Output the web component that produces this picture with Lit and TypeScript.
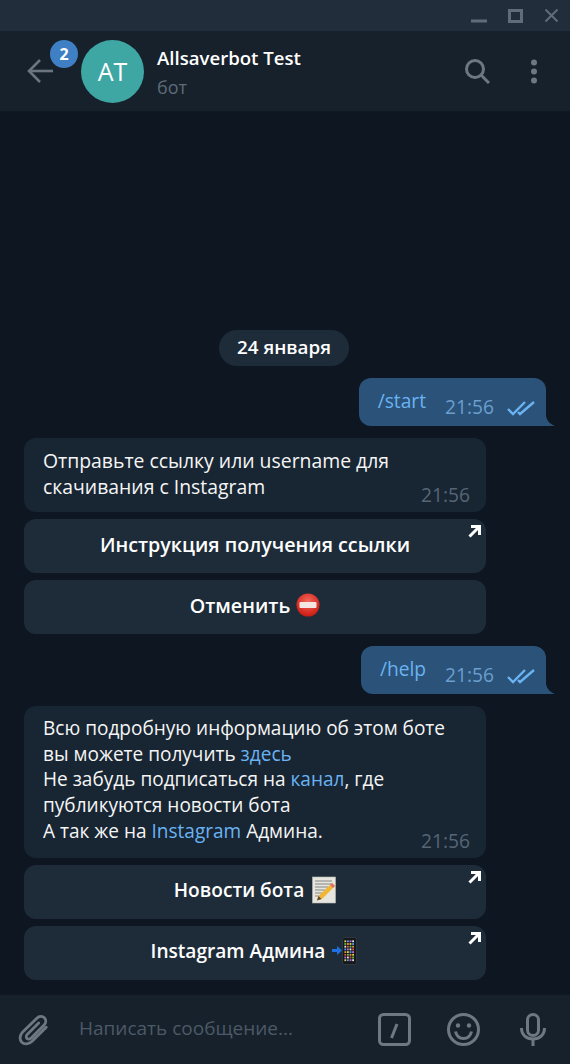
import { LitElement, html, css, svg } from 'lit';
import { customElement } from 'lit/decorators.js';

const checks = html`<svg class="checks" width="28" height="16" viewBox="0 0 28 16" fill="none" stroke="#6ab3f3" stroke-width="2.4">
  <path d="M1 9l5 5L18 2"/><path d="M11 12l2 2L27 2"/>
</svg>`;

const corner = html`<svg class="corner" width="13" height="13" viewBox="0 0 13 13" fill="none" stroke="#fff" stroke-width="3">
  <path d="M3 1.500h8.500V10"/><path d="M11 2L1.500 11.500"/>
</svg>`;

const noEntry = html`<svg class="emoji" width="24" height="24" viewBox="0 0 24 24">
  <defs><radialGradient id="ne" cx="50%" cy="35%" r="70%"><stop offset="0" stop-color="#f4685c"/><stop offset="1" stop-color="#c8140c"/></radialGradient></defs>
  <circle cx="12" cy="12" r="11.500" fill="url(#ne)"/>
  <rect x="3.500" y="9" width="17" height="6" rx="1" fill="#f3e6e2"/>
</svg>`;

const memo = html`<svg class="emoji memo" width="24" height="28" viewBox="0 0 24 28">
  <rect x="0.500" y="1" width="23" height="26" fill="#e6e6de" stroke="#b9b9b0" stroke-width="0.600"/>
  <path d="M3 5h17M3 8h17M3 11h13M3 14h10M3 17h8M3 20h6" stroke="#7d7d7a" stroke-width="0.900"/>
  <path d="M20 7l3 3L10 23l-5 1.500L6.500 20z" fill="#f2b632"/>
  <path d="M20 7l3 3-2 2-3-3z" fill="#e0706a"/>
  <path d="M5 24.500l1.500-4.500 3 3z" fill="#5b4a3a"/>
</svg>`;

const phone = () => {
  const colors = ['#e8d44d', '#d9534f', '#4da3e8', '#6cc04a', '#c46cd0', '#f0943a', '#e8e8e8'];
  const cells = [];
  for (let r = 0; r < 8; r++) {
    for (let c = 0; c < 4; c++) {
      cells.push(svg`<rect x=${13.4 + c * 2.6} y=${3.4 + r * 2.7} width="1.8" height="1.8" fill=${colors[(r * 3 + c * 2) % 7]}/>`);
    }
  }
  return html`<svg class="emoji" width="28" height="28" viewBox="0 0 28 28">
    <rect x="11.500" y="0.500" width="14" height="27" rx="2" fill="#15181d" stroke="#3a3f45" stroke-width="0.700"/>
    ${cells}
    <path d="M1 12h5V9l5 4.500L6 18v-3H1z" fill="#1f6fe0"/>
  </svg>`;
};

@customElement('app-root')
export class AppRoot extends LitElement {
  static styles = css`
    :host {
      display: flex;
      flex-direction: column;
      width: 570px;
      height: 1064px;
      background: #0e1621;
      font-family: 'Open Sans', sans-serif;
      font-size: 19.2px;
      line-height: 25px;
      color: #f5f5f5;
      overflow: hidden;
    }
    .titlebar {
      flex: none;
      height: 31px;
      background: #212d3b;
      display: flex;
      justify-content: flex-end;
      align-items: center;
      padding-right: 12px;
    }
    .titlebar svg { display: block; }
    .titlebar .max { margin: 0 22px 0 21px; }
    .header {
      flex: none;
      height: 81px;
      box-sizing: border-box;
      background: #17212b;
      display: flex;
      align-items: center;
      padding: 0 32px 0 27px;
      border-bottom: 1px solid #101921;
    }
    .back {
      position: relative;
      width: 54px;
      height: 60px;
      flex: none;
    }
    .back svg { position: absolute; left: 0; top: 18px; }
    .badge {
      position: absolute;
      left: 23px;
      top: -1px;
      width: 28px;
      height: 28px;
      border-radius: 50%;
      background: #3e80c3;
      color: #fff;
      font-size: 16px;
      font-weight: 700;
      line-height: 28px;
      text-align: center;
    }
    .avatar {
      width: 63px;
      height: 63px;
      flex: none;
      border-radius: 50%;
      background: #3ea6a3;
      color: #fff;
      font-size: 25px;
      display: flex;
      align-items: center;
      justify-content: center;
    }
    .peer {
      margin-left: 13px;
      flex: 1;
      padding-top: 2px;
    }
    .name {
      font-size: 18.6px;
      font-weight: 600;
      color: #fff;
      line-height: 25px;
    }
    .status {
      font-size: 18px;
      color: #5e6b78;
      line-height: 25px;
      margin-top: 5px;
    }
    .header-icons {
      display: flex;
      align-items: center;
      gap: 40px;
    }
    .header-icons svg { display: block; }
    .chat {
      flex: 1;
      min-height: 0;
      display: flex;
      flex-direction: column;
      justify-content: flex-end;
      padding: 0 24px 14px;
    }
    .date {
      align-self: center;
      margin: 0 0 12px -2px;
      height: 36px;
      padding: 0 18px;
      border-radius: 18px;
      background: #1e2c3a;
      color: #fff;
      font-size: 18.8px;
      font-weight: 600;
      line-height: 35px;
    }
    .out {
      position: relative;
      align-self: flex-end;
      box-sizing: border-box;
      height: 48px;
      background: #2b5278;
      border-radius: 12px 12px 0 12px;
      display: flex;
      color: #6ab3f3;
      padding: 10px 11px 0 19px;
      margin: 0 0 12px;
    }
    .out::after {
      content: '';
      position: absolute;
      right: -9px;
      bottom: 0;
      width: 9px;
      height: 10px;
      background: #2b5278;
      clip-path: path('M0 0 C1 5 4 8 9 10 L0 10 Z');
    }
    .out .text { margin-right: 19px; }
    .out .time {
      color: #6a9fd0;
      margin-top: 6px;
    }
    .checks { margin: 12px 0 0 13px; flex: none; }
    .in {
      position: relative;
      box-sizing: border-box;
      width: 462px;
      background: #182533;
      border-radius: 12px;
      padding: 10px 19px 0;
      margin-bottom: 7px;
      line-height: 25.7px;
    }
    .in p { margin: 0; }
    .in .time {
      position: absolute;
      right: 16px;
      bottom: 5px;
      color: #566575;
      font-size: 19.2px;
      line-height: 25px;
    }
    .in a { color: #6ab3f3; text-decoration: none; }
    .first { height: 74px; font-size: 19.4px; }
    .second { height: 152px; font-size: 19.05px; }
    .btn {
      position: relative;
      box-sizing: border-box;
      width: 462px;
      height: 54px;
      padding-bottom: 4px;
      border-radius: 12px;
      background: #1e2c3a;
      color: #fff;
      font-size: 19.7px;
      font-weight: 600;
      display: flex;
      align-items: center;
      justify-content: center;
      gap: 6px;
      margin-bottom: 7px;
    }
    .btn.small { font-size: 19.1px; }
    .btn.last { margin-bottom: 12px; }
    .btn.end { margin-bottom: 0; }
    .emoji { flex: none; display: block; }
    .memo { margin-left: 2px; }
    .corner { position: absolute; top: 6px; right: 5px; }
    .composer {
      flex: none;
      height: 70px;
      box-sizing: border-box;
      background: #17212b;
      border-top: 1px solid #101921;
      display: flex;
      align-items: center;
      padding: 0 24px 0 18px;
    }
    .composer svg { display: block; flex: none; }
    .placeholder {
      flex: 1;
      margin: 0 0 3px 29px;
      font-size: 19px;
      color: #4c5966;
    }
    .composer-icons {
      display: flex;
      align-items: center;
      gap: 36px;
    }
    .composer-icons .mic { margin-left: 4px; }
  `;

  render() {
    return html`
      <div class="titlebar">
        <svg width="16" height="16" viewBox="0 0 16 16"><path d="M0 13h16" stroke="#5e6c7b" stroke-width="3"/></svg>
        <svg class="max" width="15" height="14" viewBox="0 0 15 14" fill="none" stroke="#5e6c7b" stroke-width="3"><rect x="1.500" y="1.500" width="12" height="11"/></svg>
        <svg width="13" height="13" viewBox="0 0 13 13" fill="none" stroke="#5e6c7b" stroke-width="2"><path d="M0.500 0.500l12 12M12.500 0.500l-12 12"/></svg>
      </div>
      <div class="header">
        <div class="back">
          <svg width="26" height="24" viewBox="0 0 26 24" fill="none" stroke="#6a7580" stroke-width="2.600"><path d="M26 12H2"/><path d="M13 1L2 12l11 11"/></svg>
          <div class="badge">2</div>
        </div>
        <div class="avatar">AT</div>
        <div class="peer">
          <div class="name">Allsaverbot Test</div>
          <div class="status">бот</div>
        </div>
        <div class="header-icons">
          <svg width="25" height="25" viewBox="0 0 25 25" fill="none" stroke="#6d7883" stroke-width="3"><circle cx="10" cy="10" r="8.500"/><path d="M16 16l8 8"/></svg>
          <svg width="8" height="25" viewBox="0 0 8 25" fill="#6d7883"><circle cx="4" cy="3.500" r="3"/><circle cx="4" cy="12.500" r="3"/><circle cx="4" cy="21.500" r="3"/></svg>
        </div>
      </div>
      <div class="chat">
        <div class="date">24 января</div>
        <div class="out">
          <span class="text">/start</span><span class="time">21:56</span>${checks}
        </div>
        <div class="in first">
          <p>Отправьте ссылку или username для<br />скачивания с Instagram</p>
          <span class="time">21:56</span>
        </div>
        <div class="btn">Инструкция получения ссылки${corner}</div>
        <div class="btn last">Отменить ${noEntry}</div>
        <div class="out">
          <span class="text">/help</span><span class="time">21:56</span>${checks}
        </div>
        <div class="in second">
          <p>Всю подробную информацию об этом боте<br />вы можете получить <a>здесь</a><br />Не забудь подписаться на <a>канал</a>, где<br />публикуются новости бота<br />А так же на <a>Instagram</a> Админа.</p>
          <span class="time">21:56</span>
        </div>
        <div class="btn small">Новости бота ${memo}${corner}</div>
        <div class="btn small end">Instagram Админа ${phone()}${corner}</div>
      </div>
      <div class="composer">
        <svg width="32" height="32" viewBox="0 0 34 34" fill="none" stroke="#6d7883" stroke-width="3" stroke-linecap="round"><path d="M30 14L15 29c-3.500 3.500-8.500 3.500-11 1s-2.500-7.500 1-11L20 4.500c2.500-2.500 6-2.500 8-.5s2 5.500-.5 8L14 25.500c-1.500 1.500-3.500 1.500-4.500.5s-1-3 .5-4.500L22 9.500"/></svg>
        <div class="placeholder">Написать сообщение...</div>
        <div class="composer-icons">
          <svg width="33" height="33" viewBox="0 0 33 33" fill="none" stroke="#6d7883"><rect x="1.500" y="1.500" width="30" height="30" rx="4" stroke-width="3"/><path d="M13.500 25L19 11" stroke-width="3"/></svg>
          <svg width="33" height="33" viewBox="0 0 33 33" fill="none" stroke="#6d7883" stroke-width="3"><circle cx="16.500" cy="16.500" r="15"/><path d="M8.500 18.500c1 4.500 4 7 8 7s7-2.500 8-7" /><circle cx="11" cy="12.500" r="2.200" fill="#6d7883" stroke="none"/><circle cx="22" cy="12.500" r="2.200" fill="#6d7883" stroke="none"/></svg>
          <svg class="mic" width="26" height="34" viewBox="0 0 26 34" fill="none" stroke="#6d7883" stroke-width="3"><rect x="7.500" y="1.500" width="11" height="21" rx="5.500"/><path d="M1.500 15c0 7 5 11 11.500 11s11.500-4 11.500-11"/><path d="M13 26v7"/></svg>
        </div>
      </div>
    `;
  }
}
